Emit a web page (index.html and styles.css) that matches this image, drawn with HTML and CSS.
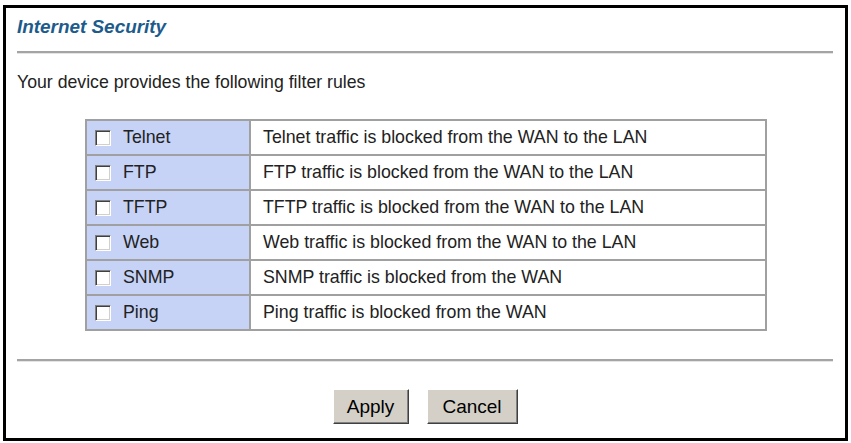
FILE: index.html
```html
<!DOCTYPE html>
<html>
<head>
<meta charset="utf-8">
<title>Internet Security</title>
<link rel="stylesheet" href="styles.css">
</head>
<body>
<div class="panel">
  <h1 class="title">Internet Security</h1>
  <div class="rule"></div>
  <p class="desc">Your device provides the following filter rules</p>
  <table class="rules">
    <tr><td class="name"><label><input type="checkbox" class="cb"><span>Telnet</span></label></td><td class="info">Telnet traffic is blocked from the WAN to the LAN</td></tr>
    <tr><td class="name"><label><input type="checkbox" class="cb"><span>FTP</span></label></td><td class="info">FTP traffic is blocked from the WAN to the LAN</td></tr>
    <tr><td class="name"><label><input type="checkbox" class="cb"><span>TFTP</span></label></td><td class="info">TFTP traffic is blocked from the WAN to the LAN</td></tr>
    <tr><td class="name"><label><input type="checkbox" class="cb"><span>Web</span></label></td><td class="info">Web traffic is blocked from the WAN to the LAN</td></tr>
    <tr><td class="name"><label><input type="checkbox" class="cb"><span>SNMP</span></label></td><td class="info">SNMP traffic is blocked from the WAN</td></tr>
    <tr><td class="name"><label><input type="checkbox" class="cb"><span>Ping</span></label></td><td class="info">Ping traffic is blocked from the WAN</td></tr>
  </table>
  <div class="rule rule-bottom"></div>
  <div class="actions">
    <button class="btn btn-apply">Apply</button>
    <button class="btn btn-cancel">Cancel</button>
  </div>
</div>
</body>
</html>
```
FILE: styles.css
```css
html, body {
  margin: 0;
  padding: 0;
  background: #fff;
}
body {
  font-family: "Liberation Sans", Arial, sans-serif;
  color: #222;
}
.panel {
  box-sizing: border-box;
  margin: 5px 3px 2px 3px;
  height: 436px;
  border: 3px solid #000;
  padding: 0 12px 0 11px;
  display: flex;
  flex-direction: column;
}
.title {
  margin: 9px 0 0 0;
  font-size: 18.9px;
  line-height: 20px;
  font-weight: bold;
  font-style: italic;
  color: #1d5b8c;
}
.rule {
  height: 2px;
  background: #a4a4a4;
  border-bottom: 1px solid #e4e4e4;
  margin-top: 14px;
}
.rule-bottom {
  margin-top: 28px;
}
.desc {
  margin: 18px 0 0 0;
  font-size: 17.7px;
  line-height: 20px;
}
.rules {
  margin: 27px 0 0 68px;
  width: 682px;
  border-collapse: collapse;
  border: 2px solid #a0a0a0;
  font-size: 17.8px;
}
.rules td {
  border: 2px solid #a0a0a0;
  height: 33px;
  padding: 0;
  box-sizing: border-box;
}
.rules tr {
  height: 35px;
}
.name {
  width: 164px;
  background: #c6d3f7;
  padding-left: 8px !important;
}
.name label {
  display: flex;
  align-items: center;
  gap: 12px;
}
.info {
  padding-left: 12px !important;
  background: #fff;
}
.cb {
  appearance: none;
  -webkit-appearance: none;
  margin: 0;
  width: 16px;
  height: 16px;
  box-sizing: border-box;
  background: #fff;
  border-top: 1px solid #808080;
  border-left: 1px solid #808080;
  border-right: 1px solid #fff;
  border-bottom: 1px solid #fff;
  box-shadow: inset 1px 1px 0 #404040, inset -1px -1px 0 #d4d0c8;
  flex: none;
}
.actions {
  margin-top: 27px;
  display: flex;
  justify-content: center;
  gap: 18px;
}
.btn {
  height: 35px;
  box-sizing: border-box;
  background: #d4d0c8;
  font-family: "Liberation Sans", Arial, sans-serif;
  font-size: 19px;
  color: #000;
  padding: 0;
  border-top: 1px solid #fff;
  border-left: 1px solid #fff;
  border-right: 1px solid #404040;
  border-bottom: 1px solid #404040;
  box-shadow: inset -1px -1px 0 #808080;
}
.btn-apply { width: 76px; }
.btn-cancel { width: 91px; }
```
